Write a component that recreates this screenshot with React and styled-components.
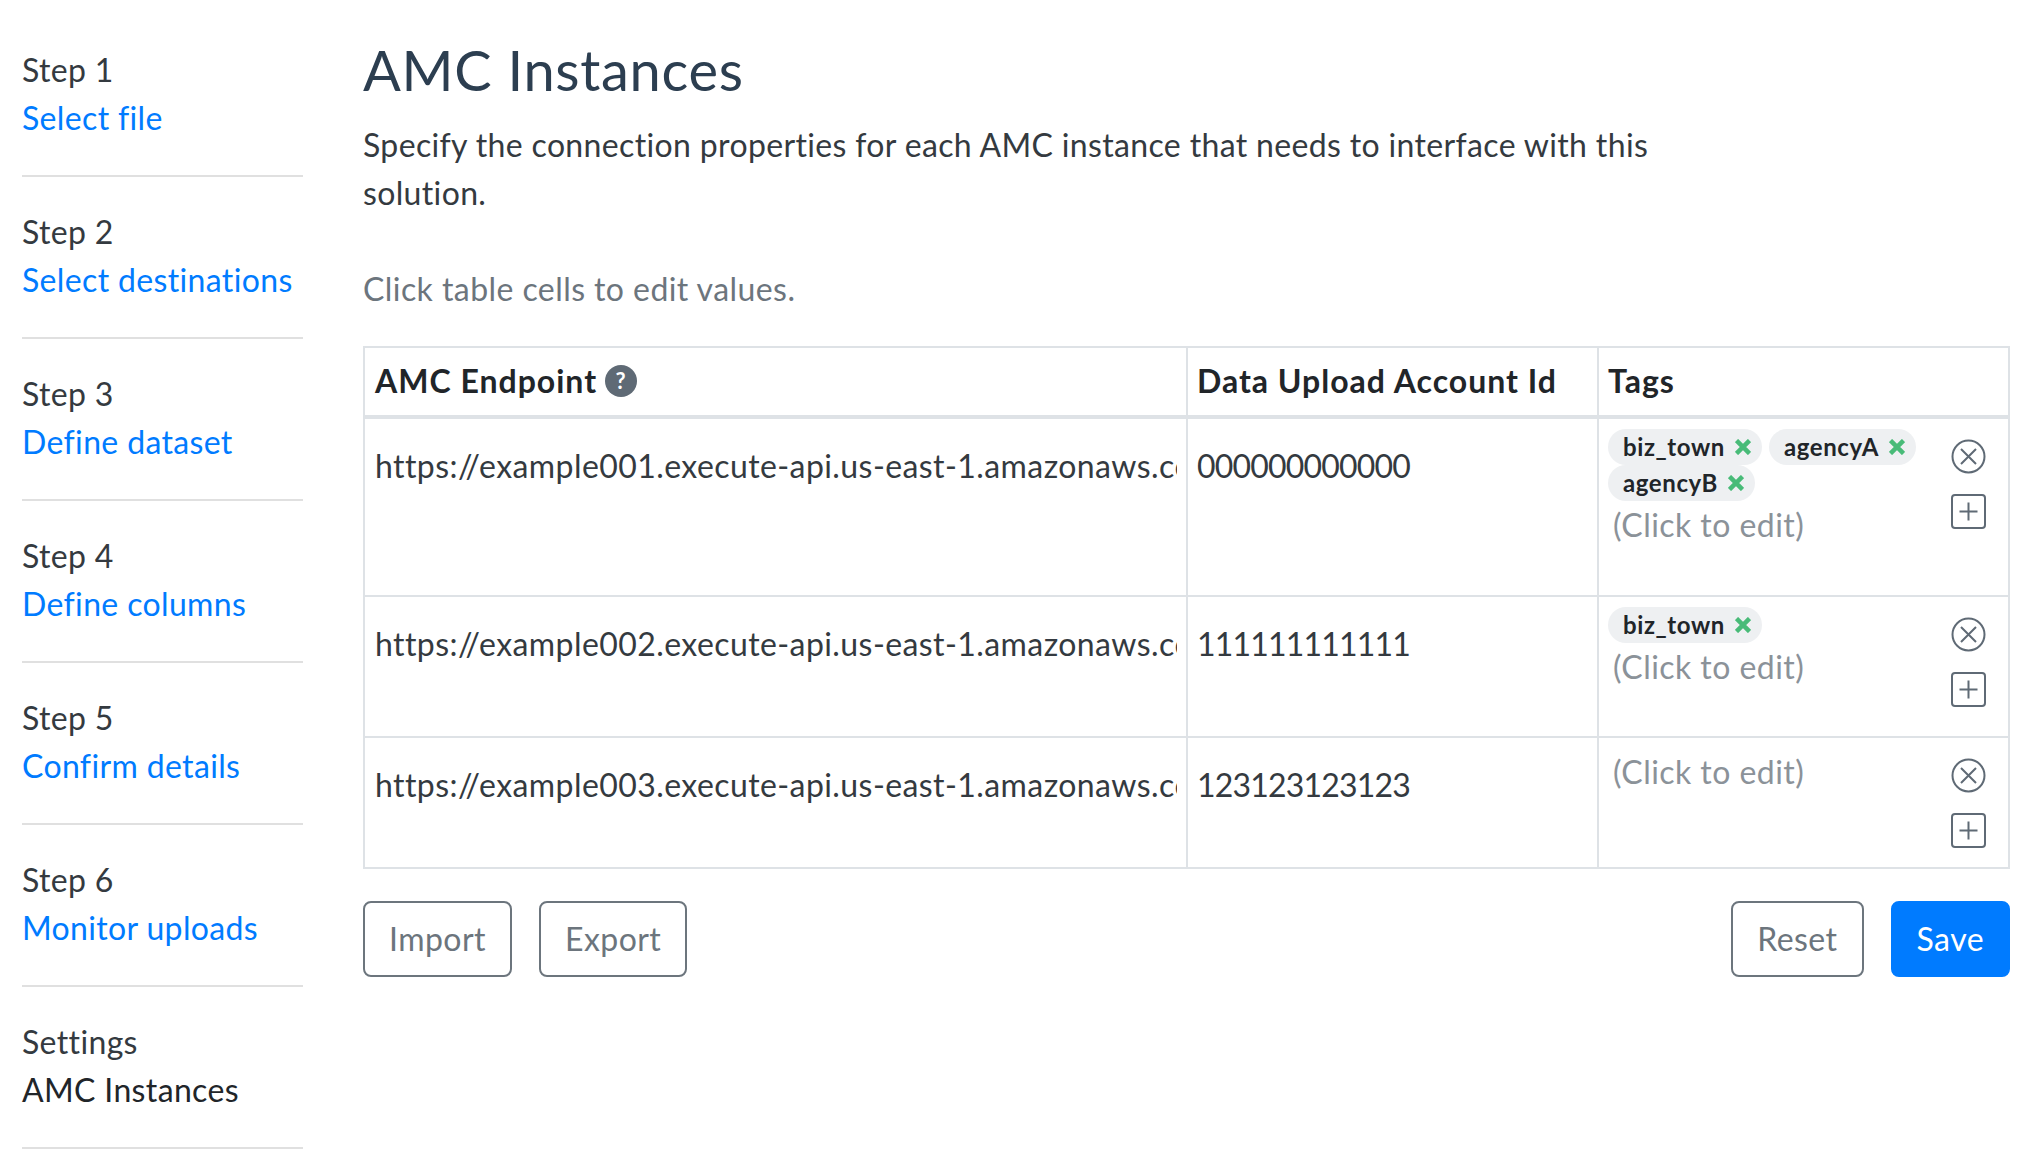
import React from 'react'
import styled, { createGlobalStyle } from 'styled-components'

const GlobalStyle = createGlobalStyle`
  html, body { margin: 0; padding: 0; background: #fff; }
  body {
    font-family: "Lato", "Open Sans", sans-serif;
    font-size: 32px;
    line-height: 48px;
    letter-spacing: 0.35px;
    color: #212529;
  }
`

const steps = [
  { step: 'Step 1', label: 'Select file' },
  { step: 'Step 2', label: 'Select destinations' },
  { step: 'Step 3', label: 'Define dataset' },
  { step: 'Step 4', label: 'Define columns' },
  { step: 'Step 5', label: 'Confirm details' },
  { step: 'Step 6', label: 'Monitor uploads' },
  { step: 'Settings', label: 'AMC Instances', active: true },
]

const rows = [
  { endpoint: 'https://example001.execute-api.us-east-1.amazonaws.com', account: '000000000000', tags: ['biz_town', 'agencyA', 'agencyB'], height: 179 },
  { endpoint: 'https://example002.execute-api.us-east-1.amazonaws.com', account: '111111111111', tags: ['biz_town'], height: 141 },
  { endpoint: 'https://example003.execute-api.us-east-1.amazonaws.com', account: '123123123123', tags: [], height: 131 },
]

function CircleX() {
  return (
    <svg width="35" height="35" viewBox="0 0 35 35" fill="none" stroke="#5f6a75" strokeWidth="2">
      <circle cx="17.5" cy="17.5" r="16" />
      <path d="M10 10l15 15M25 10L10 25" />
    </svg>
  )
}

function SquarePlus() {
  return (
    <svg width="35" height="35" viewBox="0 0 35 35" fill="none" stroke="#5f6a75" strokeWidth="2">
      <rect x="1" y="1" width="33" height="33" rx="3" />
      <path d="M17.5 8.5v18M8.5 17.5h18" />
    </svg>
  )
}

function TagX() {
  return (
    <svg width="16" height="16" viewBox="0 0 16 16" fill="none" stroke="#48bb78" strokeWidth="4.5">
      <path d="M1.5 1.5l13 13M14.5 1.5l-13 13" />
    </svg>
  )
}

export default function App() {
  return (
    <Page>
      <GlobalStyle />
      <Sidebar>
        {steps.map((s) => (
          <StepItem key={s.step}>
            <StepName>{s.step}</StepName>
            <StepLink $active={s.active}>{s.label}</StepLink>
          </StepItem>
        ))}
      </Sidebar>
      <Main>
        <Title>AMC Instances</Title>
        <Description>
          Specify the connection properties for each AMC instance that needs to interface with this solution.
        </Description>
        <Hint>Click table cells to edit values.</Hint>
        <Table>
          <colgroup>
            <col width="823" />
            <col width="411" />
            <col width="411" />
          </colgroup>
          <thead>
            <tr>
              <Th>
                <HeadWrap>
                  AMC Endpoint
                  <HelpBadge>?</HelpBadge>
                </HeadWrap>
              </Th>
              <Th>Data Upload Account Id</Th>
              <Th>Tags</Th>
            </tr>
          </thead>
          <tbody>
            {rows.map((r) => (
              <Row key={r.account} $height={r.height}>
                <Td><Clip>{r.endpoint}</Clip></Td>
                <AccountCell>{r.account}</AccountCell>
                <TagCell>
                  <TagLayout>
                    <TagList>
                      {r.tags.length > 0 && (
                        <Pills>
                          {r.tags.map((t) => (
                            <Pill key={t}>
                              {t}
                              <TagX />
                            </Pill>
                          ))}
                        </Pills>
                      )}
                      <Placeholder>(Click to edit)</Placeholder>
                    </TagList>
                    <RowIcons>
                      <CircleX />
                      <SquarePlus />
                    </RowIcons>
                  </TagLayout>
                </TagCell>
              </Row>
            ))}
          </tbody>
        </Table>
        <Actions>
          <ButtonGroup>
            <OutlineButton>Import</OutlineButton>
            <OutlineButton>Export</OutlineButton>
          </ButtonGroup>
          <ButtonGroup>
            <OutlineButton>Reset</OutlineButton>
            <SaveButton>Save</SaveButton>
          </ButtonGroup>
        </Actions>
      </Main>
    </Page>
  )
}

const Page = styled.div`
  display: flex;
  width: 2034px;
  height: 1160px;
  overflow: hidden;
  box-sizing: border-box;
`
const Sidebar = styled.nav`
  width: 281px;
  margin-left: 22px;
  padding-top: 15px;
  flex-shrink: 0;
`
const StepItem = styled.div`
  padding: 31px 0 33px;
  border-bottom: 2px solid #e0e0e0;
`
const StepName = styled.div`
  color: #343a40;
`
const StepLink = styled.a`
  display: block;
  color: ${(p) => (p.$active ? '#212529' : '#007bff')};
`
const Main = styled.main`
  width: 1647px;
  margin-left: 60px;
  padding-top: 36px;
`
const Title = styled.h1`
  margin: 0 0 18px;
  font-size: 56px;
  font-weight: 400;
  line-height: 67px;
  letter-spacing: 0.7px;
  color: #2c3e50;
`
const Description = styled.p`
  margin: 0 0 48px;
  width: 1320px;
  color: #343a40;
`
const Hint = styled.p`
  margin: 0 0 33px;
  letter-spacing: 0.43px;
  color: #6c757d;
`
const Table = styled.table`
  width: 1647px;
  table-layout: fixed;
  border-collapse: collapse;
  border: 2px solid #dee2e6;
`
const Th = styled.th`
  height: 70px;
  padding: 0 9px 2px;
  box-sizing: border-box;
  text-align: left;
  font-weight: 700;
  letter-spacing: 1px;
  color: #212529;
  border: 2px solid #dee2e6;
  border-bottom-width: 4px;
  &:first-child { padding-left: 10px; }
`
const HeadWrap = styled.span`
  display: flex;
  align-items: center;
  gap: 8px;
`
const HelpBadge = styled.span`
  display: flex;
  align-items: center;
  justify-content: center;
  width: 32px;
  height: 32px;
  border-radius: 50%;
  background: #5f6a75;
  color: #fff;
  font-size: 22px;
  line-height: 1;
`
const Row = styled.tr`
  height: ${(p) => p.$height}px;
`
const Td = styled.td`
  padding: 23px 9px;
  vertical-align: top;
  letter-spacing: 0.42px;
  color: #343a40;
  border: 2px solid #dee2e6;
  &:first-child { padding-left: 10px; }
`
const AccountCell = styled(Td)`
  letter-spacing: -0.8px;
`
const Clip = styled.div`
  white-space: nowrap;
  overflow: hidden;
`
const TagCell = styled(Td)`
  padding: 10px 8px 0 9px;
`
const TagLayout = styled.div`
  display: flex;
  justify-content: space-between;
`
const TagList = styled.div`
  flex: 1;
  min-width: 0;
`
const Pills = styled.div`
  display: flex;
  flex-wrap: wrap;
  column-gap: 7px;
`
const Pill = styled.span`
  display: inline-flex;
  align-items: center;
  gap: 10px;
  height: 36px;
  padding: 0 11px 0 15px;
  border-radius: 18px;
  background: #eef0f2;
  color: #212529;
  font-size: 24px;
  font-weight: 700;
  line-height: 36px;
  letter-spacing: 0.6px;
`
const Placeholder = styled.div`
  padding-left: 5px;
  letter-spacing: 0.45px;
  color: #8b9299;
`
const RowIcons = styled.div`
  display: flex;
  flex-direction: column;
  gap: 20px;
  padding: 10px 14px 0 0;
`
const Actions = styled.div`
  display: flex;
  justify-content: space-between;
  margin-top: 32px;
`
const ButtonGroup = styled.div`
  display: flex;
  gap: 27px;
`
const OutlineButton = styled.button`
  height: 76px;
  padding: 0 24px;
  font: inherit;
  letter-spacing: 0.45px;
  color: #6c757d;
  background: #fff;
  border: 2px solid #6c757d;
  border-radius: 8px;
`
const SaveButton = styled(OutlineButton)`
  color: #fff;
  background: #007bff;
  border-color: #007bff;
`
